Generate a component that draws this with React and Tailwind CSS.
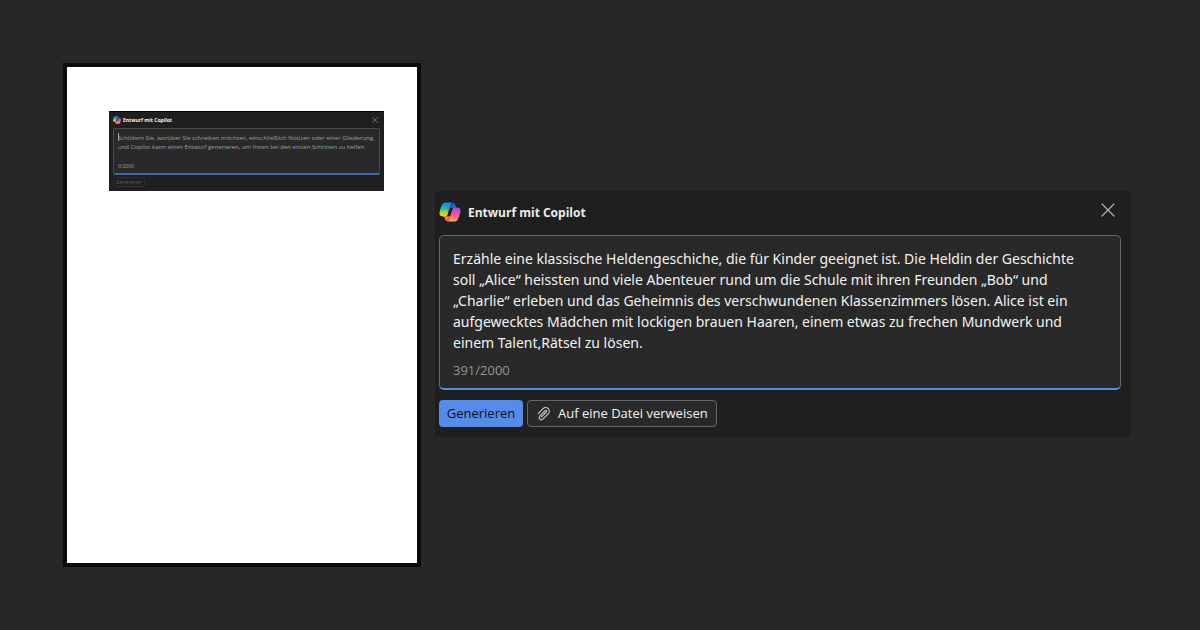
import React from "react";

const STORY_PROMPT = [
  "Erzähle eine klassische Heldengeschiche, die für Kinder geeignet ist. Die Heldin der Geschichte",
  "soll „Alice“ heissten und viele Abenteuer rund um die Schule mit ihren Freunden „Bob“ und",
  "„Charlie“ erleben und das Geheimnis des verschwundenen Klassenzimmers lösen. Alice ist ein",
  "aufgewecktes Mädchen mit lockigen brauen Haaren, einem etwas zu frechen Mundwerk und",
  "einem Talent,Rätsel zu lösen.",
].join("\n");

const EMPTY_HINT = [
  "Schildern Sie, worüber Sie schreiben möchten, einschließlich Notizen oder einer Gliederung,",
  "und Copilot kann einen Entwurf generieren, um Ihnen bei den ersten Schritten zu helfen",
].join("\n");

function CopilotLogo({ id, className }) {
  return (
    <svg viewBox="2 3 44 42" className={className} aria-hidden="true">
      <defs>
        <radialGradient id={`${id}-a`} gradientUnits="userSpaceOnUse" cx="38" cy="20" r="19">
          <stop offset="0.1" stopColor="#00aeff" />
          <stop offset="0.75" stopColor="#2253ce" />
          <stop offset="1" stopColor="#0736c4" />
        </radialGradient>
        <radialGradient id={`${id}-b`} gradientUnits="userSpaceOnUse" cx="11" cy="33" r="17">
          <stop offset="0" stopColor="#ffb657" />
          <stop offset="0.63" stopColor="#ff5f3d" />
          <stop offset="0.92" stopColor="#c02b3c" />
        </radialGradient>
        <linearGradient id={`${id}-c`} gradientUnits="userSpaceOnUse" x1="14" y1="5" x2="11" y2="33">
          <stop offset="0.1" stopColor="#0d91e1" />
          <stop offset="0.45" stopColor="#2fb6a0" />
          <stop offset="0.7" stopColor="#b5cf35" />
          <stop offset="1" stopColor="#ffd000" />
        </linearGradient>
        <radialGradient id={`${id}-d`} gradientUnits="userSpaceOnUse" cx="41" cy="12" r="39">
          <stop offset="0.07" stopColor="#8c48ff" />
          <stop offset="0.5" stopColor="#f2598a" />
          <stop offset="0.9" stopColor="#ffb152" />
        </radialGradient>
      </defs>
      <path fill={`url(#${id}-a)`} d="M34.142 7.325A4.63 4.63 0 0 0 29.7 4h-1.35a4.63 4.63 0 0 0-4.554 3.794L21.48 20.407l.575-1.965a4.63 4.63 0 0 1 4.444-3.33h7.853l3.294 1.282 3.175-1.283h-.926a4.63 4.63 0 0 1-4.443-3.325z" />
      <path fill={`url(#${id}-b)`} d="M14.33 40.656A4.63 4.63 0 0 0 18.779 44h2.87a4.63 4.63 0 0 0 4.629-4.51l.312-12.163-.654 2.233a4.63 4.63 0 0 1-4.443 3.329h-7.919l-2.823-1.531-3.057 1.53h.911a4.63 4.63 0 0 1 4.447 3.344z" />
      <path fill={`url(#${id}-c)`} d="M29.5 4H13.46c-4.583 0-7.332 6.057-9.165 12.113C2.123 23.29-.72 32.885 7.503 32.885h6.925a4.63 4.63 0 0 0 4.456-3.358 2078 2078 0 0 1 4.971-17.156c.843-2.843 1.544-5.284 2.621-6.805C27.08 4.714 28.086 4 29.5 4z" />
      <path fill={`url(#${id}-d)`} d="M18.498 44h16.04c4.582 0 7.332-6.058 9.165-12.115 2.171-7.177 5.013-16.775-3.208-16.775h-6.926a4.63 4.63 0 0 0-4.455 3.358 2084 2084 0 0 1-4.972 17.16c-.842 2.844-1.544 5.285-2.62 6.806-.604.852-1.61 1.566-3.024 1.566z" />
    </svg>
  );
}

function CloseIcon({ className }) {
  return (
    <svg viewBox="0 0 14 14" className={className} fill="none" stroke="currentColor" strokeWidth="1.2" strokeLinecap="round" aria-hidden="true">
      <path d="M1 1l12 12M13 1L1 13" />
    </svg>
  );
}

function AttachIcon({ className }) {
  return (
    <svg viewBox="0 0 16 16" className={className} fill="none" stroke="currentColor" strokeWidth="1.1" strokeLinecap="round" strokeLinejoin="round" aria-hidden="true">
      <path d="M2.2 7.6l4.9-4.9a3.6 3.6 0 0 1 5.1 5.1l-5.4 5.4a2.2 2.2 0 0 1-3.1-3.1l5.4-5.4a.9.9 0 0 1 1.3 1.3l-4.9 4.9" />
    </svg>
  );
}

function PreviewDraft() {
  return (
    <section className="flex flex-col border-t border-black bg-[#1f1f1f] px-1 pt-1 pb-1">
      <header className="flex h-3 items-start gap-0.5 pr-0.5">
        <CopilotLogo id="small" className="size-2" />
        <h2 className="flex-1 text-[5px] leading-2 font-bold text-[#f4f4f4]">Entwurf mit Copilot</h2>
        <button type="button" aria-label="Vorschau schließen" className="flex h-2 items-center text-[#b0b0b0]">
          <CloseIcon className="size-[6px]" />
        </button>
      </header>
      <div className="relative flex flex-col rounded-xs border border-b-2 border-[#4a4a4a] border-b-[#3f66ac] bg-[#292929] px-1 pt-[5px] pb-px">
        <span className="absolute top-1 left-1 h-2 w-px bg-[#a0a0a0]" aria-hidden="true" />
        <textarea
          aria-label="Beschreibung des Entwurfs"
          rows={2}
          placeholder={EMPTY_HINT}
          className="block h-[26px] w-full resize-none overflow-hidden bg-transparent text-[6px] leading-[9px] whitespace-pre text-white outline-none placeholder:text-[#a0a0a0]"
        />
        <p className="text-[5px] leading-3 text-[#a0a0a0]">0/2000</p>
      </div>
      <div className="flex pt-0.5">
        <button type="button" disabled className="h-[10px] w-8 rounded-xs border border-[#303030] text-[5px] leading-2 text-[#5c5c5c]">
          Generieren
        </button>
      </div>
    </section>
  );
}

function DraftPanel() {
  return (
    <section className="mb-0.5 flex min-w-0 flex-1 flex-col bg-[#1f1f1f] pt-2 pr-[10px] pb-[10px] pl-1">
      <header className="flex h-9 items-start gap-[7px] pr-1.5">
        <CopilotLogo id="large" className="mt-[3px] h-5 w-[22px]" />
        <h1 className="mt-1 flex-1 text-[12px] leading-5 font-bold text-[#ececec]">Entwurf mit Copilot</h1>
        <button type="button" aria-label="Schließen" className="mt-1 text-[#b4b4b4]">
          <CloseIcon className="size-[14px]" />
        </button>
      </header>
      <div className="flex flex-col rounded-[5px] border border-b-2 border-[#666666] border-b-[#568bea] bg-[#292929] px-[13px] pt-3 pb-2">
        <textarea
          aria-label="Beschreibung der Geschichte"
          rows={5}
          defaultValue={STORY_PROMPT}
          className="block w-full resize-none overflow-hidden bg-transparent font-['Noto_Sans',sans-serif] text-[14px] leading-[21px] whitespace-pre text-[#f2f2f2] outline-none"
        />
        <p className="pt-[7px] text-[13px] leading-5 text-[#959595]">391/2000</p>
      </div>
      <div className="flex gap-1 pt-[10px]">
        <button type="button" className="h-[27px] w-[84px] rounded-sm bg-[#568bea] text-[13px] text-[#101010]">
          Generieren
        </button>
        <button type="button" className="flex h-[27px] items-center gap-1.5 rounded-sm border border-[#666666] bg-[#292929] px-2 text-[13px] text-[#f2f2f2]">
          <AttachIcon className="size-4 text-[#d0d0d0]" />
          Auf eine Datei verweisen
        </button>
      </div>
    </section>
  );
}

export default function App() {
  return (
    <main className="flex min-h-screen items-center gap-[14px] bg-[#272727] pr-[69px] pl-[63px] font-['Open_Sans','Noto_Sans',sans-serif]">
      <article className="min-h-[504px] w-[358px] shrink-0 border-4 border-[#0a0a0a] bg-white pt-11 pr-[33px] pl-[42px]">
        <PreviewDraft />
      </article>
      <DraftPanel />
    </main>
  );
}
